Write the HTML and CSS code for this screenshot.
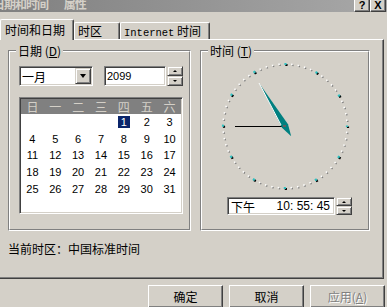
FILE: index.html
```html
<!DOCTYPE html>
<html lang="zh-CN">
<head>
  <meta charset="UTF-8">
  <title>日期和时间 属性</title>
  <link rel="stylesheet" href="styles.css">
</head>
<body>
  <div class="titlebar">
    <span class="title">日期和时间 属性</span>
    <div class="title-btns">
      <span class="tbtn">?</span>
      <span class="tbtn">X</span>
    </div>
  </div>

  <div class="tabs">
    <div class="tab tab-date active">时间和日期</div>
    <div class="tab tab-zone">时区</div>
    <div class="tab tab-net"><span class="latin">Internet</span> 时间</div>
  </div>

  <div class="panel">
    <div class="groups">
      <!-- 日期 -->
      <div class="group date-group">
        <div class="group-in">
          <div class="legend">日期 (<u>D</u>)</div>
          <div class="date-row">
            <div class="combo sunken">
              <span>一月</span>
              <span class="drop-btn raised"><span class="tri-down"></span></span>
            </div>
            <div class="year sunken">2099</div>
            <div class="spin">
              <span class="raised"><span class="tri-up"></span></span>
              <span class="raised"><span class="tri-dn"></span></span>
            </div>
          </div>
          <div class="calendar sunken">
            <div class="cal-head">
              <span>日</span><span>一</span><span>二</span><span>三</span><span>四</span><span>五</span><span>六</span>
            </div>
            <div class="cal-days">
              <span></span><span></span><span></span><span></span>
              <span><b class="sel">1</b></span><span>2</span><span>3</span>
              <span>4</span><span>5</span><span>6</span><span>7</span><span>8</span><span>9</span><span>10</span>
              <span>11</span><span>12</span><span>13</span><span>14</span><span>15</span><span>16</span><span>17</span>
              <span>18</span><span>19</span><span>20</span><span>21</span><span>22</span><span>23</span><span>24</span>
              <span>25</span><span>26</span><span>27</span><span>28</span><span>29</span><span>30</span><span>31</span>
            </div>
          </div>
        </div>
      </div>

      <!-- 时间 -->
      <div class="group time-group">
        <div class="group-in">
          <div class="legend">时间 (<u>T</u>)</div>
          <svg class="clock" width="166" height="139" viewBox="0 0 166 139">
            <circle cx="84" cy="69" r="62" fill="none" stroke="#808080" stroke-width="1.5" stroke-dasharray="1.5 4.9926" stroke-dashoffset="0.75"/>
            <circle cx="83" cy="68" r="62" fill="none" stroke="#fff" stroke-width="1.5" stroke-dasharray="1.5 4.9926" stroke-dashoffset="0.75"/>
            <circle cx="84" cy="69" r="62" fill="none" stroke="#000" stroke-width="2.2" stroke-dasharray="2.2 30.263" stroke-dashoffset="1.1"/>
            <circle cx="83" cy="68" r="62" fill="none" stroke="#30c0c0" stroke-width="2.2" stroke-dasharray="2.2 30.263" stroke-dashoffset="1.1"/>
            <line x1="33" y1="68.5" x2="82" y2="68.5" stroke="#000" stroke-width="1"/>
            <polygon points="57,25 86,66.2 89.2,78.3 80,69.8" fill="#008080"/>
            <line x1="57" y1="25" x2="79" y2="67" stroke="#fff" stroke-width="1"/>
            <rect x="81" y="67" width="3" height="2" fill="#606060"/>
          </svg>
          <div class="time-row">
            <div class="time-box sunken">
              <span>下午</span>
              <span class="hms">10: 55: 45</span>
            </div>
            <div class="spin spin-sm">
              <span class="raised"><span class="tri-up"></span></span>
              <span class="raised"><span class="tri-dn"></span></span>
            </div>
          </div>
        </div>
      </div>
    </div>

    <div class="zone">当前时区：中国标准时间</div>
  </div>

  <div class="buttons">
    <div class="btn">确定</div>
    <div class="btn">取消</div>
    <div class="btn disabled">应用(<u>A</u>)</div>
  </div>
</body>
</html>
```

FILE: styles.css
```css
/* Dialog dasar */
body {
  margin: 0;
  width: 387px;
  height: 307px;
  overflow: hidden;
  background: #d4d0c8;
  color: #000;
  font-family: "Noto Sans CJK SC", sans-serif;
  font-size: 12px;
}

/* Title bar (tidak aktif) */
.titlebar {
  display: flex;
  height: 12px;
  background: linear-gradient(to right, #808080, #a8a8a8);
  color: #d4d0c8;
  font-weight: bold;
}
.title {
  margin: -2px 0 0 -7px;
  line-height: 12px;
  letter-spacing: -1px;
  word-spacing: 14px;
  white-space: nowrap;
}
.title-btns {
  display: flex;
  margin: -2px 1px 0 auto;
}
.tbtn {
  width: 16px;
  height: 14px;
  box-sizing: border-box;
  background: #d4d0c8;
  border: 1px solid;
  border-color: #fff #404040 #404040 #fff;
  box-shadow: inset -1px -1px #808080;
  color: #000;
  font: bold 11px "Liberation Sans", sans-serif;
  line-height: 12px;
  text-align: center;
}

/* Tab */
.tabs {
  display: flex;
  align-items: flex-end;
  height: 27px;
}
.tab {
  height: 17px;
  box-sizing: border-box;
  border: 1px solid;
  border-bottom: none;
  border-color: #fff #404040 #404040 #fff;
  border-radius: 2px 2px 0 0;
  box-shadow: inset -1px 0 #808080;
  padding: 1px 0 0 3px;
  line-height: 14px;
  white-space: nowrap;
}
.tab.active {
  height: 21px;
  margin-bottom: -1px;
  padding: 3px 0 0 4px;
  position: relative;
  z-index: 1;
  background: #d4d0c8;
}
.tab-date { width: 74px; }
.tab-zone { width: 46px; }
.tab-net { width: 90px; }
.latin {
  font-family: "Liberation Mono", monospace;
  font-size: 10.5px;
}

/* Panel tab */
.panel {
  width: 386px;
  height: 240px;
  margin-left: -2px;
  box-sizing: border-box;
  border: 1px solid;
  border-color: #fff #404040 #404040 #fff;
  box-shadow: inset -1px -1px #808080;
  padding: 10px 0 0 9px;
}
.groups {
  display: flex;
  gap: 9px;
}

/* Group box (etched) */
.group {
  height: 181px;
  box-sizing: border-box;
  border: 1px solid;
  border-color: #808080 #fff #fff #808080;
}
.date-group { width: 183px; }
.time-group { width: 170px; }
.group-in {
  height: 100%;
  box-sizing: border-box;
  border: 1px solid;
  border-color: #fff #808080 #808080 #fff;
}
.legend {
  width: fit-content;
  height: 14px;
  margin: -8px 0 0 6px;
  padding: 0 2px;
  background: #d4d0c8;
  line-height: 14px;
}

/* Kontrol 3D */
.sunken {
  box-sizing: border-box;
  background: #fff;
  border: 1px solid;
  border-color: #808080 #fff #fff #808080;
  box-shadow: inset 1px 1px #404040, inset -1px -1px #d4d0c8;
}
.raised {
  box-sizing: border-box;
  background: #d4d0c8;
  border: 1px solid;
  border-color: #d4d0c8 #404040 #404040 #d4d0c8;
  box-shadow: inset 1px 1px #fff, inset -1px -1px #808080;
  display: flex;
  align-items: center;
  justify-content: center;
}

.date-row {
  display: flex;
  height: 20px;
  margin: 8px 0 0 9px;
}
.combo {
  display: flex;
  align-items: center;
  width: 74px;
  height: 20px;
  padding-left: 2px;
}
.drop-btn {
  width: 16px;
  height: 16px;
  margin: 0 1px 0 auto;
}
.tri-down {
  width: 0;
  height: 0;
  border-style: solid;
  border-width: 4px 3.5px 0;
  border-color: #000 transparent transparent;
}
.tri-up, .tri-dn {
  width: 0;
  height: 0;
  border-style: solid;
  border-color: transparent;
}
.tri-up {
  border-width: 0 2px 2px;
  border-bottom-color: #000;
}
.tri-dn {
  border-width: 2px 2px 0;
  border-top-color: #000;
}
.year {
  width: 62px;
  height: 20px;
  margin-left: 11px;
  padding-left: 2px;
  font: 11px "Liberation Sans", sans-serif;
  line-height: 18px;
}
.spin {
  display: flex;
  flex-direction: column;
  width: 16px;
  height: 20px;
  margin-left: 1px;
}
.spin .raised {
  height: 10px;
}
.spin-sm {
  height: 18px;
}
.spin-sm .raised {
  height: 9px;
}

/* Kalender */
.calendar {
  width: 164px;
  height: 117px;
  margin: 11px 0 0 9px;
  padding: 1px;
  overflow: hidden;
}
.cal-head, .cal-days {
  display: grid;
  grid-template-columns: repeat(7, 1fr);
  text-align: center;
}
.cal-head {
  height: 15px;
  background: #808080;
  color: #d4d0c8;
  line-height: 15px;
}
.cal-days {
  grid-auto-rows: 16.7px;
  font: 11px "Liberation Sans", sans-serif;
  line-height: 16.7px;
}
.sel {
  display: inline-block;
  padding: 0 3px;
  line-height: 12px;
  font-weight: normal;
  background: #0a246a;
  color: #fff;
}

/* Jam */
.clock {
  display: block;
}
.time-row {
  display: flex;
  height: 18px;
  margin-left: 25px;
}
.time-box {
  display: flex;
  align-items: center;
  width: 108px;
  height: 18px;
  padding: 0 4px 0 3px;
}
.hms {
  margin-left: auto;
  font: 12px "Liberation Sans", sans-serif;
  white-space: pre;
}

.zone {
  margin-top: 11px;
  line-height: 14px;
}

/* Tombol bawah */
.buttons {
  display: flex;
  justify-content: flex-end;
  gap: 6px;
  margin-top: 6px;
  padding-right: 2px;
}
.btn {
  width: 75px;
  height: 23px;
  box-sizing: border-box;
  border: 1px solid;
  border-color: #fff #404040 #404040 #fff;
  box-shadow: inset -1px -1px #808080;
  text-align: center;
  line-height: 21px;
}
.btn.disabled {
  color: #808080;
  text-shadow: 1px 1px #fff;
}
```
